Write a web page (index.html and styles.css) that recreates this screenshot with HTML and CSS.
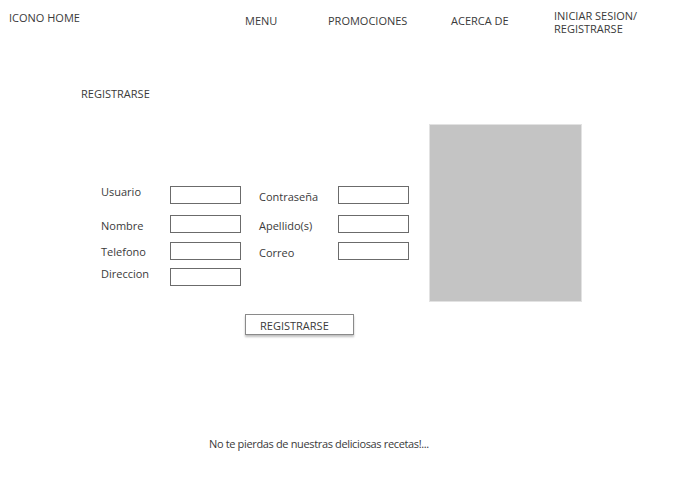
FILE: index.html
```html
<!DOCTYPE html>
<html lang="es">
  <head>
    <meta charset="utf-8">
    <title>Registrarse</title>
    <meta name="viewport" content="width=device-width">
    <link rel="stylesheet" href="styles.css">
  </head>
  <body>
    <header class="topbar">
      <div class="logo">ICONO HOME</div>
      <nav>
        <ul>
          <li class="nav-menu"><a href="#">MENU</a></li>
          <li class="nav-promos"><a href="#">PROMOCIONES</a></li>
          <li class="nav-about"><a href="#">ACERCA DE</a></li>
          <li class="nav-login"><a href="#">INICIAR SESION/<br>REGISTRARSE</a></li>
        </ul>
      </nav>
    </header>

    <main class="register">
      <h2>REGISTRARSE</h2>
      <div class="content">
        <form class="form">
          <div class="fields">
            <label class="lbl l1">Usuario</label>
            <input type="text">
            <label class="lbl l4">Contraseña</label>
            <input type="password">

            <label class="lbl l4">Nombre</label>
            <input type="text">
            <label class="lbl l4">Apellido(s)</label>
            <input type="text">

            <label class="lbl l3">Telefono</label>
            <input type="text">
            <label class="lbl l4">Correo</label>
            <input type="text">

            <label class="lbl l1">Direccion</label>
            <input type="text">
          </div>
          <button type="submit" class="btn">REGISTRARSE</button>
        </form>
        <div class="picture"></div>
      </div>
    </main>

    <footer>
      No te pierdas de nuestras deliciosas recetas!...
    </footer>
  </body>
</html>
```

FILE: styles.css
```css
body {
  margin: 0;
  padding: 0;
  background-color: #fff;
  color: #3a3a3a;
  font-family: "Open Sans", sans-serif;
  font-size: 11px;
  height: 478px;
}

a {
  color: inherit;
  text-decoration: none;
}

/* top navigation */
.topbar {
  display: flex;
  height: 40px;
}

.logo {
  padding: 11px 0 0 9px;
  line-height: 14px;
  width: 236px;
}

nav ul {
  display: flex;
  list-style: none;
  margin: 0;
  padding: 0;
}

nav li {
  line-height: 13px;
}

.nav-menu {
  padding-top: 14px;
  width: 83px;
}

.nav-promos {
  padding-top: 14px;
  width: 123px;
}

.nav-about {
  padding-top: 14px;
  width: 103px;
}

.nav-login {
  padding-top: 9px;
}

/* register section */
.register {
  padding-left: 81px;
}

.register h2 {
  font-size: 11px;
  font-weight: normal;
  margin: 47px 0 0 0;
  line-height: 14px;
}

.content {
  display: flex;
  align-items: flex-start;
  margin-top: 23px;
}

.form {
  margin: 62px 0 0 20px;
  width: 328px;
}

.fields {
  display: grid;
  grid-template-columns: 69px 71px 97px 71px;
  grid-template-rows: 29px 27px 26px 18px;
  align-items: start;
}

.fields input {
  box-sizing: border-box;
  width: 71px;
  height: 18px;
  margin: 0;
  border: 1px solid #6b6b6b;
  border-radius: 0;
  background: #fff;
}

.fields input:nth-of-type(2),
.fields input:nth-of-type(4) {
  grid-column: 4;
}

.fields label:nth-of-type(2),
.fields label:nth-of-type(4),
.fields label:nth-of-type(6) {
  padding-left: 18px;
}

.lbl {
  line-height: 14px;
}

.l1 { margin-top: -1px; }
.l3 { margin-top: 3px; }
.l4 { margin-top: 4px; }

.btn {
  display: block;
  box-sizing: border-box;
  width: 109px;
  height: 21px;
  margin: 28px 0 0 144px;
  padding: 1px 0 0 14px;
  text-align: left;
  font-family: inherit;
  font-size: 11px;
  color: #3a3a3a;
  background: #fff;
  border: 1px solid #8a8a8a;
  border-radius: 0;
  box-shadow: 0 2px 2px rgba(0, 0, 0, 0.25);
}

.picture {
  box-sizing: border-box;
  width: 153px;
  height: 178px;
  background-color: #c4c4c4;
  border: 1px solid #e2e2e2;
}

footer {
  padding: 102px 0 0 209px;
  line-height: 14px;
  letter-spacing: -0.35px;
}
```
